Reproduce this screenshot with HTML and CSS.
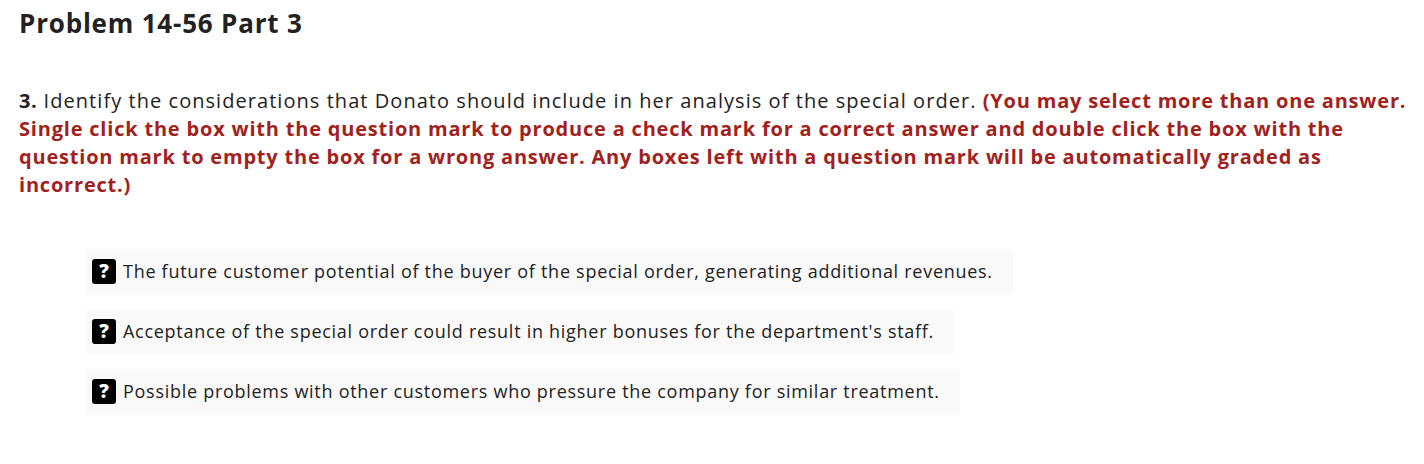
FILE: index.html
```html
<!DOCTYPE html>
<html lang="en">
<head>
<meta charset="utf-8">
<title>Problem 14-56 Part 3</title>
<link rel="stylesheet" href="styles.css">
</head>
<body>
<main class="page">
  <h1 class="title">Problem 14-56 Part 3</h1>
  <p class="question"><b class="num">3.</b> Identify the considerations that Donato should include in her analysis of the special order. <strong class="note">(You may select more than one answer. Single click the box with the question mark to produce a check mark for a correct answer and double click the box with the question mark to empty the box for a wrong answer. Any boxes left with a question mark will be automatically graded as incorrect.)</strong></p>
  <ul class="options">
    <li class="option"><span class="qbox">?</span><span class="otext">The future customer potential of the buyer of the special order, generating additional revenues.</span></li>
    <li class="option"><span class="qbox">?</span><span class="otext">Acceptance of the special order could result in higher bonuses for the department's staff.</span></li>
    <li class="option"><span class="qbox">?</span><span class="otext">Possible problems with other customers who pressure the company for similar treatment.</span></li>
  </ul>
</main>
</body>
</html>
```

FILE: styles.css
```css
html, body {
  margin: 0;
  padding: 0;
  background: #ffffff;
}
body {
  font-family: "Open Sans", "Liberation Sans", sans-serif;
  color: #222222;
}
.page {
  padding: 6px 14px 0 19px;
}
.title {
  margin: 0;
  font-size: 26px;
  font-weight: 700;
  line-height: 34px;
  letter-spacing: 0.8px;
  color: #222222;
}
.question {
  margin: 47px 0 0 0;
  font-size: 20px;
  line-height: 28px;
  letter-spacing: 1.05px;
  color: #222222;
}
.num {
  font-weight: 700;
  letter-spacing: 0.6px;
}
.note {
  font-weight: 700;
  letter-spacing: 0.8px;
  color: #a1221d;
}
.options {
  list-style: none;
  margin: 50px 0 0 67px;
  padding: 0;
  display: flex;
  flex-direction: column;
  align-items: flex-start;
  gap: 14px;
}
.option {
  display: flex;
  align-items: center;
  gap: 7px;
  background: #f9f9f9;
  border-radius: 4px;
  padding: 10px 20px 11px 6px;
  font-size: 18px;
  line-height: 25px;
  letter-spacing: 0.72px;
  color: #222222;
}
.qbox {
  display: inline-flex;
  align-items: center;
  justify-content: center;
  width: 24px;
  height: 25px;
  border-radius: 3px;
  background: #000000;
  color: #ffffff;
  font-weight: 800;
  font-size: 19px;
  letter-spacing: 0;
  line-height: 1;
}
```
